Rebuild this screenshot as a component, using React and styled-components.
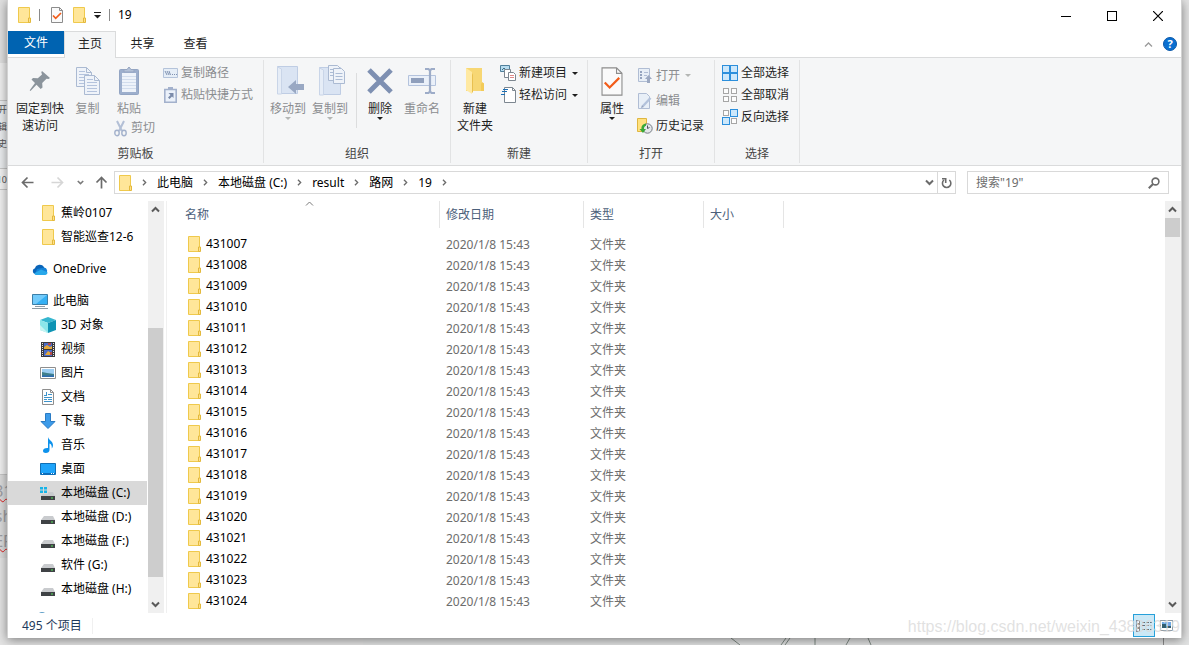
import React, { useState } from "react";
import styled, { createGlobalStyle, css } from "styled-components";

const GlobalStyle = createGlobalStyle`
  * {
    box-sizing: border-box;
  }

  body {
    margin: 0;
    overflow: hidden;
    font-family: "Noto Sans", "Noto Sans CJK SC", sans-serif;
    font-size: 12px;
    line-height: 16px;
    color: #000000;
  }

  button,
  input {
    margin: 0;
    padding: 0;
    border: 0;
    background: none;
    font: inherit;
    color: inherit;
  }

  svg {
    display: block;
    flex: none;
  }
`;

/* ---------- Desktop and what lies behind the window ---------- */

const Desktop = styled.div`
  position: relative;
  height: 100vh;
  padding: 0 7px 7px;
  background: #e4e4e4;
  overflow: hidden;
`;

const Behind = styled.div`
  position: absolute;
  inset: 0;
  display: flex;
  justify-content: space-between;
`;

const BehindLeft = styled.div`
  width: 7px;
  display: flex;
  flex-direction: column;
`;

const BehindPane = styled.div`
  height: ${(props) => props.$height}px;
  background: ${(props) => props.$color};
  border-bottom: ${(props) => (props.$line ? "1px solid #c8c8c8" : "0")};
  display: flex;
  flex-direction: column;
  align-items: ${(props) => (props.$big ? "center" : "flex-end")};
  justify-content: center;
  overflow: hidden;
  white-space: nowrap;
  font-size: ${(props) => (props.$big ? 16 : 9)}px;
  line-height: ${(props) => (props.$big ? 25 : 17)}px;
  color: ${(props) => (props.$big ? "#a0a0a4" : "#555555")};
`;

const Misspelt = styled.span`
  text-decoration: underline wavy #e02020 1px;
`;

const BehindRight = styled.div`
  width: 826px;
  align-self: flex-end;
  height: 7px;
  background: #e2e3e3;
`;

const Window = styled.main`
  position: relative;
  height: 100%;
  display: flex;
  flex-direction: column;
  background: #ffffff;
  border: solid #d2d2d2;
  border-width: 0 1px 0 1px;
  box-shadow: 0 2px 10px rgba(0, 0, 0, 0.45);
`;

/* ---------- Title bar ---------- */

const TitleBar = styled.header`
  height: 31px;
  flex: none;
  display: flex;
  justify-content: space-between;
`;

const QuickAccess = styled.div`
  display: flex;
  align-items: center;
  gap: 8px;
  padding-left: 10px;
  padding-bottom: 1px;
`;

const Separator = styled.span`
  width: 1px;
  height: 12px;
  background: #8a8a8a;
`;

const IconButton = styled.button`
  display: flex;
  align-items: center;
  justify-content: center;
  width: ${(props) => props.$width}px;
  flex: none;
`;

const WindowTitle = styled.h1`
  margin: 0;
  font-size: 12px;
  font-weight: 400;
`;

const WindowButtons = styled.div`
  display: flex;
`;

/* ---------- Tabs ---------- */

const Tabs = styled.nav`
  height: 27px;
  flex: none;
  display: flex;
  border-bottom: 1px solid #dadbdc;
`;

const Tab = styled.button`
  height: 27px;
  width: ${(props) => (props.$active ? 52 : 53)}px;
  padding-bottom: 2px;
  color: #222222;

  ${(props) =>
    props.$active &&
    css`
      background: #f5f6f7;
      border: 1px solid #dadbdc;
      border-bottom: 0;
    `}

  ${(props) =>
    props.$file &&
    css`
      width: 56px;
      height: 23px;
      padding: 0;
      background: #0063b1;
      color: #ffffff;
    `}
`;

const TabTools = styled.div`
  margin-left: auto;
  display: flex;
  padding-right: 1px;
`;

/* ---------- Ribbon ---------- */

const Ribbon = styled.section`
  height: 108px;
  flex: none;
  display: flex;
  background: #f5f6f7;
  border-bottom: 1px solid #dadbdc;
`;

const Group = styled.div`
  width: ${(props) => props.$width}px;
  display: flex;
  flex-direction: column;
  justify-content: space-between;
  margin: 2px 0;
  border-right: 1px solid #e2e3e4;
`;

const GroupBody = styled.div`
  display: flex;
  align-items: flex-start;
  padding-left: 3px;
`;

const GroupLabel = styled.div`
  height: 17px;
  text-align: center;
  color: #444444;
`;

const BigButton = styled.button`
  width: ${(props) => props.$width}px;
  padding-top: 4px;
  display: flex;
  flex-direction: column;
  align-items: center;
  line-height: 17px;
  color: ${(props) => (props.disabled ? "#8b8d90" : "#1e1e1e")};
  white-space: pre-line;

  &:disabled svg {
    opacity: 0.85;
  }
`;

const BigIcon = styled.span`
  height: 34px;
  margin-bottom: 2px;
  display: flex;
  align-items: center;
`;

const Column = styled.div`
  display: flex;
  flex-direction: column;
  align-items: flex-start;
  padding-top: ${(props) => props.$top ?? 2}px;
  padding-left: ${(props) => props.$left || 0}px;
`;

const SmallButton = styled.button`
  height: ${(props) => (props.$tall ? 25 : 22)}px;
  display: flex;
  align-items: center;
  gap: 3px;
  white-space: nowrap;
  color: ${(props) => (props.disabled ? "#8b8d90" : "#1e1e1e")};

  &:disabled svg {
    opacity: 0.8;
  }
`;

const IconSlot = styled.span`
  width: 16px;
  display: flex;
  justify-content: center;
`;

const Divider = styled.span`
  width: 1px;
  height: 55px;
  margin: 13px 3px 0 5px;
  background: #dcddde;
`;

const Arrow = styled.span`
  border: 3px solid transparent;
  border-top-color: ${(props) => (props.$dim ? "#b4b6b4" : "#1e1e1e")};
  border-bottom: 0;
  margin-left: ${(props) => props.$left || 0}px;
`;

/* ---------- Address row ---------- */

const AddressRow = styled.div`
  height: 35px;
  flex: none;
  display: flex;
  align-items: flex-start;
  padding: 5px 12px 0 6px;
`;

const NavButtons = styled.div`
  display: flex;
  height: 23px;
  width: 100px;
`;

const AddressBar = styled.div`
  flex: 1;
  height: 23px;
  display: flex;
  border: 1px solid #d9d9d9;
`;

const Crumbs = styled.div`
  flex: 1;
  display: flex;
  align-items: center;
  gap: 9px;
  padding-left: 4px;
`;

const Crumb = styled.a`
  display: flex;
  align-items: center;
  color: #000000;
  text-decoration: none;
`;

const SearchBox = styled.label`
  width: 202px;
  height: 23px;
  margin-left: 11px;
  padding: 0 8px;
  display: flex;
  align-items: center;
  border: 1px solid #d9d9d9;
`;

const SearchInput = styled.input`
  flex: 1;
  min-width: 0;
  outline: 0;

  &::placeholder {
    color: #6d6d6d;
    opacity: 1;
  }
`;

/* ---------- Tree, list and scroll bars ---------- */

const Main = styled.div`
  flex: 1;
  min-height: 0;
  display: flex;
`;

const Tree = styled.aside`
  width: 140px;
  flex: none;
  overflow: hidden;
`;

const TreeItem = styled.a`
  width: 139px;
  height: 24px;
  margin-top: ${(props) => (props.$gap ? 8 : 0)}px;
  padding-left: ${(props) => (props.$root ? 24 : 32)}px;
  display: flex;
  align-items: center;
  gap: 5px;
  background: ${(props) => (props.$selected ? "#d9d9d9" : "transparent")};
  color: #000000;
  text-decoration: none;
  white-space: nowrap;
`;

const ScrollBar = styled.div`
  width: ${(props) => props.$width}px;
  flex: none;
  display: flex;
  flex-direction: column;
  background: #f0f0f0;
`;

const ScrollButton = styled.button`
  height: 17px;
  padding-right: 1px;
  display: flex;
  align-items: center;
  justify-content: center;
`;

const ScrollTrack = styled.div`
  flex: 1;
  display: flex;
  flex-direction: column;
  padding-right: 1px;
`;

const ScrollThumb = styled.div`
  background: #cdcdcd;
`;

const ListPane = styled.section`
  flex: 1;
  min-width: 0;
  overflow: hidden;
  margin-left: 2px;
  border-left: 1px solid #f0f0f0;
`;

const FileTable = styled.table`
  width: 100%;
  table-layout: fixed;
  border-collapse: collapse;
`;

const HeadCell = styled.th`
  position: relative;
  width: ${(props) => (props.$width ? `${props.$width}px` : "auto")};
  height: 33px;
  padding: 0;
  vertical-align: top;
  text-align: left;
  font-weight: 400;
  color: #4c607a;
`;

const HeadLabel = styled.div`
  height: 27px;
  padding-left: ${(props) => (props.$first ? 18 : 6)}px;
  border-right: 1px solid #e5e5e5;
  line-height: 27px;
`;

const SortMark = styled.span`
  position: absolute;
  top: -2px;
  left: 138px;
`;

const Cell = styled.td`
  height: 21px;
  padding: 0 0 0 6px;
  color: #6d6d6d;
`;

const FileName = styled.div`
  height: 21px;
  padding-bottom: 1px;
  display: flex;
  align-items: center;
  gap: 5px;
  padding-left: 15px;
  color: #000000;
`;

/* ---------- Status bar ---------- */

const StatusBar = styled.footer`
  height: 25px;
  flex: none;
  display: flex;
  align-items: center;
  padding: 0 4px 0 14px;
  color: #1e395b;
`;

const StatusText = styled.span`
  padding-right: 10px;
  border-right: 1px solid #f0f0f0;
`;

const ViewButtons = styled.div`
  margin-left: auto;
  display: flex;
`;

const ViewButton = styled.button`
  width: 22px;
  height: 23px;
  display: flex;
  align-items: center;
  justify-content: center;
  border: 1px solid ${(props) => (props.$active ? "#26a0da" : "transparent")};
  background: ${(props) => (props.$active ? "#cbe8f6" : "transparent")};
`;

const Watermark = styled.div`
  position: absolute;
  right: 1px;
  bottom: 1px;
  font-family: "Liberation Sans", Arial, sans-serif;
  font-size: 16px;
  line-height: 20px;
  color: rgba(220, 220, 220, 0.85);
  pointer-events: none;
`;

/* ---------- Icons ---------- */

const Svg = ({ w, h, children, ...rest }) => (
  <svg width={w} height={h} viewBox={`0 0 ${w} ${h}`} fill="none" aria-hidden="true" {...rest}>
    {children}
  </svg>
);

const FolderIcon = () => (
  <Svg w={13} h={16}>
    <path d="M.5.5h11v15H.5z" fill="#ffe699" stroke="#efc94c" />
    <path d="M10.500 15.500v-4.500h2v4.500z" fill="#ffe08a" stroke="#e3b93c" />
  </Svg>
);

const CheckPageIcon = ({ w = 12, h = 16 }) => (
  <svg width={w} height={h} viewBox="0 0 12 16" fill="none" aria-hidden="true">
    <path d="M.5.5h8l3 3v12H.5z" fill="#fafafa" stroke="#8c8c8c" strokeWidth={w > 12 ? 0.6 : 1} />
    <path d="M8.500.5v3h3" stroke="#8c8c8c" strokeWidth={w > 12 ? 0.6 : 1} />
    <path d="M2 8.500l2.700 2.800L10 6" stroke="#f25c19" strokeWidth={w > 12 ? 1.2 : 1.7} />
  </svg>
);

const ChevronIcon = ({ dir = "down", color = "#5a5a5a", size = 9, weight = 2 }) => {
  const turn = { down: 0, up: 180, right: 270 }[dir];
  return (
    <svg width={size} height={size} viewBox="0 0 9 9" fill="none" aria-hidden="true">
      <path
        d="M1 2.500l3.500 3.500L8 2.500"
        stroke={color}
        strokeWidth={weight}
        transform={`rotate(${turn} 4.500 4.500)`}
      />
    </svg>
  );
};

const PinIcon = () => (
  <Svg w={22} h={22}>
    <path
      d="M13 1l8 7-1.500 1-2-.3-4.300 4.300.3 4.500-1.800 1.500-4.200-4.200L1.500 21l-.8-.7 5.300-7.300-3.500-3.500L4 8l4.800.3L13 4.500l-.7-2.200z"
      fill="#8b949c"
    />
  </Svg>
);

const PageLines = ({ x, y }) => (
  <g transform={`translate(${x} ${y})`}>
    <path d="M.5.5h10l5 5v14H.5z" fill="#eef3fa" stroke="#9fb0cc" />
    <path d="M10.500.5v5h5" stroke="#9fb0cc" />
    <path d="M3 4.500h6M3 7.500h10M3 10.500h10M3 13.500h10M3 16.500h10" stroke="#a9bbd9" />
  </g>
);

const CopyIcon = () => (
  <Svg w={24} h={28}>
    <PageLines x={0} y={0} />
    <PageLines x={8} y={8} />
  </Svg>
);

const PasteIcon = () => (
  <Svg w={20} h={30}>
    <rect x=".5" y="3.500" width="19" height="25" rx="1" fill="#8ea3c6" stroke="#8397bb" />
    <path d="M3 7h14v19H3z" fill="#edf3fb" />
    <path d="M3 10.500h14M3 13.500h14M3 16.500h14M3 19.500h14M3 22.500h14" stroke="#ccd9ec" />
    <path d="M5 6V3.500h3L10 1l2 2.500h3V6z" fill="#a8b8d2" stroke="#8597b8" />
  </Svg>
);

const CutIcon = () => (
  <Svg w={13} h={17}>
    <path d="M3 1l5 10M10 1L5 11" stroke="#a3b3cf" strokeWidth="2" />
    <ellipse cx="3" cy="13" rx="2.200" ry="2.700" stroke="#8fa1c2" strokeWidth="1.400" />
    <ellipse cx="10" cy="13" rx="2.200" ry="2.700" stroke="#8fa1c2" strokeWidth="1.400" />
  </Svg>
);

const CopyPathIcon = () => (
  <Svg w={15} h={10}>
    <path d="M.5.5h14v9H.5z" fill="#e3edf8" stroke="#a5b7d3" />
    <path d="M2 3l2 4M4 3l2 4M6 3l1.500 4M9 6.500h1M11 6.500h1M13 6.500h1" stroke="#64799f" />
  </Svg>
);

const PasteLinkIcon = () => (
  <Svg w={13} h={16}>
    <path d="M.8 2.500h11.400v12.700H.8z" fill="#e9f1fb" stroke="#8fa1c2" strokeWidth="1.600" />
    <path d="M4 0h5v3H4z" fill="#8fa1c2" />
    <path d="M4.500 6h5v5L8 9.500 5.500 12 4 10.500 6.500 8z" fill="#5d7198" />
  </Svg>
);

const MoveToIcon = () => (
  <Svg w={32} h={30}>
    <g transform="translate(4 0)">
      <path d="M1.500.5h20v27h-20z" fill="#d6e2f3" stroke="#b6c7e1" />
      <path d="M1.500 28V1l4 2v25z" fill="#e4ecf8" stroke="#c2d0e6" />
      <path d="M12 21l8-7v4h8v6h-8v4z" fill="#899bbb" />
    </g>
  </Svg>
);

const CopyToIcon = () => (
  <Svg w={32} h={32}>
    <g transform="translate(4 0)">
      <path d="M1.500 2.500h21v27h-21z" fill="#d6e2f3" stroke="#b6c7e1" />
      <path d="M1.500 30V3l4 2v25z" fill="#e4ecf8" stroke="#c2d0e6" />
      <path d="M10.500.5h9l3 3v12h-12z" fill="#eef3fa" stroke="#9fb0cc" />
      <path d="M15.500 3.500h8l3 3v12h-11z" fill="#eef3fa" stroke="#9fb0cc" />
      <path d="M12 4.500h3M12 7.500h3M12 10.500h3M17.500 8.500h7M17.500 11.500h7M17.500 14.500h7" stroke="#a0b2d0" />
    </g>
  </Svg>
);

const DeleteIcon = () => (
  <Svg w={26} h={26}>
    <path d="M2 2l22 22M24 2L2 24" stroke="#7e90b2" strokeWidth="5" />
  </Svg>
);

const RenameIcon = () => (
  <Svg w={28} h={28}>
    <path d="M.5 8.500h27v10H.5z" fill="#e9f0fa" stroke="#a9bbd9" />
    <path d="M3 11h13v5H3z" fill="#7e90b2" />
    <path d="M17 2h3.500l1.500 1.500L23.500 2H27M22 3v22M17 26h3.500l1.500-1.500 1.500 1.500H27" stroke="#8ea0c0" strokeWidth="2.200" />
  </Svg>
);

const NewFolderIcon = () => (
  <Svg w={20} h={28}>
    <path d="M1 1h16v15h2v8H1z" fill="#f7d774" />
    <path d="M1 1l6 4v22l-6-4z" fill="#ffe9a2" />
    <path d="M7 6v20l1-1V8z" fill="#e9c04f" />
    <path d="M16 24v-7l1.500-2 1.500 2v7z" fill="#f3cb58" />
  </Svg>
);

const NewItemIcon = () => (
  <Svg w={16} h={16}>
    <path d="M.5.5h9v6h-9z" fill="#b7dcef" stroke="#4f7f9b" />
    <path d="M2 5l2-2 2 2 1-1 1 1" stroke="#3b7088" />
    <path d="M4.500 4.500h6v8h-6z" fill="#ffffff" stroke="#7d8790" />
    <path d="M8.500 7.500h5l2 2v6h-7z" fill="#ffffff" stroke="#7d8790" />
    <path d="M10 10.500h4M10 12.500h4" stroke="#e08a8a" />
  </Svg>
);

const EasyAccessIcon = () => (
  <Svg w={15} h={16}>
    <path d="M3.500.5h8l3 3v12h-11z" fill="#ffffff" stroke="#7d8790" />
    <path d="M11.500.5v3h3" stroke="#7d8790" />
    <path d="M2 2.500h5M1 4.500h5M0 7.500h4" stroke="#1c6fb5" />
  </Svg>
);

const OpenIcon = () => (
  <Svg w={14} h={15}>
    <path d="M.5.5h11v13H.5z" fill="#e6eef8" stroke="#9fb0cc" />
    <path d="M2 3h2v2H2zM2 6h2v2H2zM2 9h2v2H2z" fill="#7e90b2" />
    <path d="M6 4.500h4M6 7.500h3" stroke="#9fb0cc" />
    <path d="M10.500 7l3.500 4h-2v4H9v-4H7z" fill="#8797b6" />
  </Svg>
);

const EditIcon = () => (
  <Svg w={14} h={16}>
    <path d="M.5.5h8l3 3v12H.5z" fill="#e6eef8" stroke="#9fb0cc" />
    <path d="M12.500 5L5 13" stroke="#a3b6d5" strokeWidth="2.400" />
    <path d="M3 15l1-3 2 2z" fill="#7e90b2" />
  </Svg>
);

const HistoryIcon = () => (
  <Svg w={16} h={16}>
    <path d="M.5.5h9v13h-9z" fill="#ffe17e" stroke="#dfb640" />
    <circle cx="10.500" cy="10.500" r="4.700" fill="#e4e7ea" stroke="#767d84" />
    <path d="M10.500 7.500v3l2-1" stroke="#4c5359" />
    <path d="M9 5.500C5.500 6 4 8.500 4.500 11H2.500l3.500 4 3-4H7c-.2-1.500.5-2.700 2-3.200z" fill="#38a838" />
  </Svg>
);

const SelectIcon = ({ on = [] }) => (
  <Svg w={16} h={16} shapeRendering="crispEdges">
    {[
      [0, 0],
      [8, 0],
      [0, 8],
      [8, 8],
    ].map(([x, y], i) =>
      on.includes(i) ? (
        <rect key={i} x={x + 0.5} y={y + 0.5} width="7" height="7" fill="#cde8fb" stroke="#2c8fdc" />
      ) : (
        <rect key={i} x={x + 1.5} y={y + 1.5} width="5" height="5" fill="#fdfdfd" stroke="#a6a6a6" />
      ),
    )}
  </Svg>
);

const ArrowIcon = ({ dir, color = "#6b6b6b" }) => (
  <Svg w={13} h={13}>
    <path
      d="M12.500 6.500H1.500M6.500 1.500l-5 5 5 5"
      stroke={color}
      strokeWidth="1.700"
      transform={`rotate(${{ left: 0, up: 90, right: 180 }[dir]} 6.500 6.500)`}
    />
  </Svg>
);

const RefreshIcon = () => (
  <Svg w={11} h={12}>
    <path d="M8.300 3A4.200 4.200 0 1 1 3 3" stroke="#6b6b6b" strokeWidth="1.600" />
    <path d="M1 1.800h3.700V6" stroke="#6b6b6b" strokeWidth="1.600" />
  </Svg>
);

const SearchIcon = () => (
  <Svg w={12} h={12}>
    <circle cx="7.500" cy="4.500" r="3.400" stroke="#6b6b6b" strokeWidth="1.600" />
    <path d="M5 7L.8 11.200" stroke="#6b6b6b" strokeWidth="2" />
  </Svg>
);

const CloudIcon = () => (
  <Svg w={16} h={11}>
    <path d="M3 10a3 3 0 0 1 0-5.800A5 5 0 0 1 12 3l1 5z" fill="#0a64b8" />
    <path d="M5 5l7-1.500A3.500 3.500 0 0 1 13.500 10H3z" fill="#1482d8" />
    <path d="M2 9.500L9 5.500l6.500 2.700A2.500 2.500 0 0 1 13.500 11H3.500z" fill="#28a8ea" />
  </Svg>
);

const ComputerIcon = () => (
  <Svg w={16} h={15}>
    <path d="M.5.5h15v10H.5z" fill="#35b0f4" stroke="#3c7fa8" />
    <path d="M1 1h14L4 10H1z" fill="#72cbfb" />
    <path d="M3 12.500h10M0 14.500h16" stroke="#8d9ba5" />
  </Svg>
);

const CubeIcon = () => (
  <Svg w={16} h={16}>
    <path d="M8 0l8 3-8 3-8-3z" fill="#35b6cf" />
    <path d="M0 3l8 3v10l-8-3z" fill="#8be6ea" />
    <path d="M16 3L8 6v10l8-3z" fill="#0f94b4" />
    <path d="M0 8l8 8-8-3z" fill="#c8f5f3" />
  </Svg>
);

const VideoIcon = () => (
  <Svg w={14} h={15}>
    <path d="M0 0h14v15H0z" fill="#3a3a3c" />
    <path d="M1.500 1v13M12.500 1v13" stroke="#e8e8e8" strokeDasharray="1 1" />
    <path d="M3 1h8v6H3zM3 8h8v6H3z" fill="#4a6cc8" />
    <path d="M3 5l3-2 3 2 2-1v3H3zM4 13l3-4 3 2v2z" fill="#e6a93a" />
    <path d="M7 1h3v2H7zM9 10h2v3H9z" fill="#b64a4a" />
  </Svg>
);

const PictureIcon = () => (
  <Svg w={16} h={12}>
    <path d="M.5.5h15v11H.5z" fill="#ffffff" stroke="#8e8e8e" />
    <path d="M2 2h12v8H2z" fill="#9ccdf2" />
    <path d="M2 5l5 1 7 1v3H2z" fill="#3f7f8c" />
    <path d="M2 8.500h12V10H2z" fill="#2c6bb0" />
  </Svg>
);

const DocumentIcon = () => (
  <Svg w={12} h={16}>
    <path d="M.5.5h8l3 3v12H.5z" fill="#fdfdfd" stroke="#8e8e8e" />
    <path d="M8.500.5v3h3" stroke="#8e8e8e" />
    <path d="M2 6.500h3M6 5.500h4M2 8.500h8M2 10.500h3M6 10.500h4M2 12.500h8M4.500 3v3" stroke="#3d93cb" />
  </Svg>
);

const DownloadIcon = () => (
  <Svg w={16} h={16}>
    <path d="M5.500.5h5v8H15L8 15.500 1 8.500h4.500z" fill="#3d9be9" stroke="#2a7bc4" />
  </Svg>
);

const MusicIcon = () => (
  <Svg w={12} h={16}>
    <path d="M6 0c.5 3 5 4 5 8 0 1.500-.5 2.500-1.200 3.500C10 8.500 9 7 7.500 6.500V13c0 1.800-1.600 3-3.700 3C2 16 1 15 1 13.700 1 12 2.800 10.800 6 11z" fill="#0d92ec" />
  </Svg>
);

const DesktopIcon = () => (
  <Svg w={16} h={12}>
    <path d="M.5.5h15v11H.5z" fill="#1ea4fa" stroke="#0f6fb5" />
    <path d="M1 10h14v1.500H1z" fill="#0d6dbb" />
    <path d="M2 10.500h1M11 10.500h1M13 10.500h1" stroke="#ffffff" />
  </Svg>
);

const DriveIcon = ({ system }) => (
  <Svg w={16} h={16}>
    <path d="M4 7h9l2 4H1z" fill="#c9cbce" />
    <path d="M1 11h14v4H1z" fill="#3f4245" />
    <path d="M11 13h2" stroke="#57e35c" />
    {system && (
      <>
        <path d="M0 2h8v7H0z" fill="#d9d9d9" />
        <path d="M0 2h3v2.500H0zM4 2h3v2.500H4zM0 5.500h3V8H0zM4 5.500h3V8H4z" fill="#17b4e8" />
      </>
    )}
  </Svg>
);

const NetworkIcon = () => (
  <Svg w={16} h={18}>
    <circle cx="10" cy="5" r="5" fill="#5f9fc8" />
  </Svg>
);

const DetailsViewIcon = () => (
  <Svg w={16} h={12} shapeRendering="crispEdges">
    <path d="M.5.5h3v3h-3zM.5 4.500h3v3h-3zM.5 8.500h3v3h-3z" fill="#ffffff" stroke="#8a8a8a" />
    <path d="M6 2.500h10M6 5.500h10M6 9.500h10" stroke="#5f6f7a" strokeDasharray="3 1" />
  </Svg>
);

const ThumbViewIcon = () => (
  <Svg w={13} h={11} shapeRendering="crispEdges">
    <path d="M.5.5h12v10H.5z" fill="#ffffff" stroke="#8e9aa3" />
    <path d="M2 2h9v4H2z" fill="#6ea9e6" />
    <path d="M2 4h4v4H2zM6 6h5v2H6z" fill="#315e6e" />
  </Svg>
);

/* ---------- Data ---------- */

const tree = [
  { label: "蕉岭0107", icon: <FolderIcon /> },
  { label: "智能巡查12-6", icon: <FolderIcon /> },
  { label: "OneDrive", icon: <CloudIcon />, root: true },
  { label: "此电脑", icon: <ComputerIcon />, root: true },
  { label: "3D 对象", icon: <CubeIcon /> },
  { label: "视频", icon: <VideoIcon /> },
  { label: "图片", icon: <PictureIcon /> },
  { label: "文档", icon: <DocumentIcon /> },
  { label: "下载", icon: <DownloadIcon /> },
  { label: "音乐", icon: <MusicIcon /> },
  { label: "桌面", icon: <DesktopIcon /> },
  { label: "本地磁盘 (C:)", icon: <DriveIcon system /> },
  { label: "本地磁盘 (D:)", icon: <DriveIcon /> },
  { label: "本地磁盘 (F:)", icon: <DriveIcon /> },
  { label: "软件 (G:)", icon: <DriveIcon /> },
  { label: "本地磁盘 (H:)", icon: <DriveIcon /> },
];

const crumbs = ["此电脑", "本地磁盘 (C:)", "result", "路网", "19"];

const folders = Array.from({ length: 18 }, (_, i) => ({
  name: String(431007 + i),
  date: "2020/1/8 15:43",
  type: "文件夹",
}));

/* ---------- Components ---------- */

const Big = ({ width, icon, label, arrow, disabled }) => (
  <BigButton $width={width} disabled={disabled}>
    <BigIcon>{icon}</BigIcon>
    {label}
    {arrow && <Arrow $dim={disabled} />}
  </BigButton>
);

const Small = ({ icon, label, arrow, disabled, tall }) => (
  <SmallButton disabled={disabled} $tall={tall}>
    <IconSlot>{icon}</IconSlot>
    {label}
    {arrow && <Arrow $dim={disabled} $left={2} />}
  </SmallButton>
);

const RibbonPanel = () => (
  <Ribbon>
    <Group $width={256}>
      <GroupBody>
        <Big width={58} icon={<PinIcon />} label={"固定到快\n速访问"} />
        <Big width={37} icon={<CopyIcon />} label="复制" disabled />
        <Column $top={0}>
          <Big width={46} icon={<PasteIcon />} label="粘贴" disabled />
          <Column $left={6} $top={0}>
            <Small icon={<CutIcon />} label="剪切" disabled />
          </Column>
        </Column>
        <Column $left={7}>
          <Small icon={<CopyPathIcon />} label="复制路径" disabled />
          <Small icon={<PasteLinkIcon />} label="粘贴快捷方式" disabled />
        </Column>
      </GroupBody>
      <GroupLabel>剪贴板</GroupLabel>
    </Group>
    <Group $width={187}>
      <GroupBody>
        <Big width={42} icon={<MoveToIcon />} label="移动到" arrow disabled />
        <Big width={42} icon={<CopyToIcon />} label="复制到" arrow disabled />
        <Divider />
        <Big width={40} icon={<DeleteIcon />} label="删除" arrow />
        <Big width={44} icon={<RenameIcon />} label="重命名" disabled />
      </GroupBody>
      <GroupLabel>组织</GroupLabel>
    </Group>
    <Group $width={137}>
      <GroupBody>
        <Big width={42} icon={<NewFolderIcon />} label={"新建\n文件夹"} />
        <Column $left={4}>
          <Small icon={<NewItemIcon />} label="新建项目" arrow />
          <Small icon={<EasyAccessIcon />} label="轻松访问" arrow />
        </Column>
      </GroupBody>
      <GroupLabel>新建</GroupLabel>
    </Group>
    <Group $width={127}>
      <GroupBody>
        <Big width={42} icon={<CheckPageIcon w={22} h={29} />} label="属性" arrow />
        <Column $left={4} $top={3}>
          <Small icon={<OpenIcon />} label="打开" arrow disabled tall />
          <Small icon={<EditIcon />} label="编辑" disabled tall />
          <Small icon={<HistoryIcon />} label="历史记录" tall />
        </Column>
      </GroupBody>
      <GroupLabel>打开</GroupLabel>
    </Group>
    <Group $width={85}>
      <GroupBody>
        <Column $left={4}>
          <Small icon={<SelectIcon on={[0, 1, 2, 3]} />} label="全部选择" />
          <Small icon={<SelectIcon />} label="全部取消" />
          <Small icon={<SelectIcon on={[1, 2]} />} label="反向选择" />
        </Column>
      </GroupBody>
      <GroupLabel>选择</GroupLabel>
    </Group>
  </Ribbon>
);

const Scroll = ({ width, before, size }) => (
  <ScrollBar $width={width}>
    <ScrollButton aria-label="向上滚动">
      <ChevronIcon dir="up" />
    </ScrollButton>
    <ScrollTrack>
      <ScrollThumb style={{ height: `${size}%`, marginTop: before }} />
    </ScrollTrack>
    <ScrollButton aria-label="向下滚动">
      <ChevronIcon />
    </ScrollButton>
  </ScrollBar>
);

const App = () => {
  const [selected, setSelected] = useState("本地磁盘 (C:)");
  const [query, setQuery] = useState("");

  return (
    <>
      <GlobalStyle />
      <Desktop>
        <Behind aria-hidden="true">
          <BehindLeft>
            <BehindPane $height={63} $color="#e1e1e1" />
            <BehindPane $height={38} $color="#f0f0f0" $line />
            <BehindPane $height={51} $color="#eceef0">
              <span>开</span>
              <span>辑</span>
              <span>史</span>
            </BehindPane>
            <BehindPane $height={17} $color="#eceef0" $line />
            <BehindPane $height={21} $color="#f4f4f4" $line>
              <span>010</span>
            </BehindPane>
            <BehindPane $height={285} $color="#f2f2f2" $line />
            <BehindPane $height={83} $color="#dcdcdc" $big>
              <Misspelt>31</Misspelt>
              <span>sh</span>
              <Misspelt>EP</Misspelt>
            </BehindPane>
          </BehindLeft>
          <BehindRight>
            <svg width="826" height="7" viewBox="0 0 826 7" fill="none">
              <path
                d="M368 0l9 7M427 0l-5 7M423 0l-5 7M452 0v7M487 0l-4 7M505 0l3 7"
                stroke="#7f8a84"
                strokeWidth="1"
              />
              <path d="M800.500 0v7" stroke="#8c8c8c" />
            </svg>
          </BehindRight>
        </Behind>

        <Window>
          <TitleBar>
            <QuickAccess>
              <FolderIcon />
              <Separator />
              <IconButton $width={17} aria-label="属性">
                <CheckPageIcon />
              </IconButton>
              <IconButton $width={13} aria-label="新建文件夹">
                <FolderIcon />
              </IconButton>
              <IconButton $width={7} aria-label="自定义快速访问工具栏">
                <Svg w={7} h={7}>
                  <path d="M0 .5h7" stroke="#1e1e1e" />
                  <path d="M0 3h7L3.500 6.500z" fill="#1e1e1e" />
                </Svg>
              </IconButton>
              <Separator />
              <WindowTitle>19</WindowTitle>
            </QuickAccess>
            <WindowButtons>
              <IconButton $width={46} aria-label="最小化">
                <Svg w={10} h={10}>
                  <path d="M0 5.500h10" stroke="#000000" />
                </Svg>
              </IconButton>
              <IconButton $width={46} aria-label="最大化">
                <Svg w={10} h={10} shapeRendering="crispEdges">
                  <path d="M.5.5h9v9h-9z" stroke="#000000" />
                </Svg>
              </IconButton>
              <IconButton $width={46} aria-label="关闭">
                <Svg w={10} h={10}>
                  <path d="M0 0l10 10M10 0L0 10" stroke="#000000" strokeWidth="1.200" />
                </Svg>
              </IconButton>
            </WindowButtons>
          </TitleBar>

          <Tabs>
            <Tab $file>文件</Tab>
            <Tab $active>主页</Tab>
            <Tab>共享</Tab>
            <Tab>查看</Tab>
            <TabTools>
              <IconButton $width={24} aria-label="最小化功能区">
                <ChevronIcon dir="up" color="#9a9a9a" weight={1.3} />
              </IconButton>
              <IconButton $width={20} aria-label="帮助">
                <svg width="14" height="14" viewBox="0 0 14 14">
                  <circle cx="7" cy="7" r="6.500" fill="#0a6fd0" stroke="#0a58a8" />
                  <text x="7" y="11" textAnchor="middle" fontSize="11" fontWeight="700" fill="#ffffff">
                    ?
                  </text>
                </svg>
              </IconButton>
            </TabTools>
          </Tabs>

          <RibbonPanel />

          <AddressRow>
            <NavButtons>
              <IconButton $width={27} aria-label="后退">
                <ArrowIcon dir="left" />
              </IconButton>
              <IconButton $width={32} aria-label="前进">
                <ArrowIcon dir="right" color="#d6d6d6" />
              </IconButton>
              <IconButton $width={15} aria-label="最近浏览的位置">
                <ChevronIcon size={7} color="#7a7a7a" />
              </IconButton>
              <IconButton $width={26} aria-label="向上">
                <ArrowIcon dir="up" />
              </IconButton>
            </NavButtons>
            <AddressBar>
              <Crumbs>
                <FolderIcon />
                <ChevronIcon dir="right" size={7} color="#6b6b6b" weight={1.7} />
                {crumbs.map((name) => (
                  <React.Fragment key={name}>
                    <Crumb href="#">{name}</Crumb>
                    <ChevronIcon dir="right" size={7} color="#6b6b6b" weight={1.7} />
                  </React.Fragment>
                ))}
              </Crumbs>
              <IconButton $width={16} aria-label="以前的位置">
                <ChevronIcon color="#6b6b6b" />
              </IconButton>
              <Separator style={{ height: "100%", background: "#d9d9d9" }} />
              <IconButton $width={17} aria-label="刷新">
                <RefreshIcon />
              </IconButton>
            </AddressBar>
            <SearchBox>
              <SearchInput
                aria-label="搜索"
                placeholder={'搜索"19"'}
                value={query}
                onChange={(e) => setQuery(e.target.value)}
              />
              <SearchIcon />
            </SearchBox>
          </AddressRow>

          <Main>
            <Tree>
              {tree.map((item) => (
                <TreeItem
                  key={item.label}
                  href="#"
                  $root={item.root}
                  $gap={item.root}
                  $selected={selected === item.label}
                  onClick={() => setSelected(item.label)}
                >
                  <IconSlot>{item.icon}</IconSlot>
                  {item.label}
                </TreeItem>
              ))}
              <TreeItem href="#" $root $gap aria-label="网络">
                <NetworkIcon />
              </TreeItem>
            </Tree>
            <Scroll width={16} before={110} size={66} />
            <ListPane>
              <FileTable>
                <thead>
                  <tr>
                    <HeadCell $width={273}>
                      <HeadLabel $first>名称</HeadLabel>
                      <SortMark>
                        <ChevronIcon dir="up" color="#7a7a7a" weight={1} />
                      </SortMark>
                    </HeadCell>
                    <HeadCell $width={144}>
                      <HeadLabel>修改日期</HeadLabel>
                    </HeadCell>
                    <HeadCell $width={120}>
                      <HeadLabel>类型</HeadLabel>
                    </HeadCell>
                    <HeadCell $width={80}>
                      <HeadLabel>大小</HeadLabel>
                    </HeadCell>
                    <HeadCell />
                  </tr>
                </thead>
                <tbody>
                  {folders.map((folder) => (
                    <tr key={folder.name}>
                      <Cell>
                        <FileName>
                          <FolderIcon />
                          {folder.name}
                        </FileName>
                      </Cell>
                      <Cell>{folder.date}</Cell>
                      <Cell>{folder.type}</Cell>
                      <Cell />
                      <Cell />
                    </tr>
                  ))}
                </tbody>
              </FileTable>
            </ListPane>
            <Scroll width={16} before={0} size={5} />
          </Main>

          <StatusBar>
            <StatusText>495 个项目</StatusText>
            <ViewButtons>
              <ViewButton $active aria-label="详细信息">
                <DetailsViewIcon />
              </ViewButton>
              <ViewButton aria-label="大缩略图">
                <ThumbViewIcon />
              </ViewButton>
            </ViewButtons>
          </StatusBar>
          <Watermark>https://blog.csdn.net/weixin_43886319</Watermark>
        </Window>
      </Desktop>
    </>
  );
};

export default App;
